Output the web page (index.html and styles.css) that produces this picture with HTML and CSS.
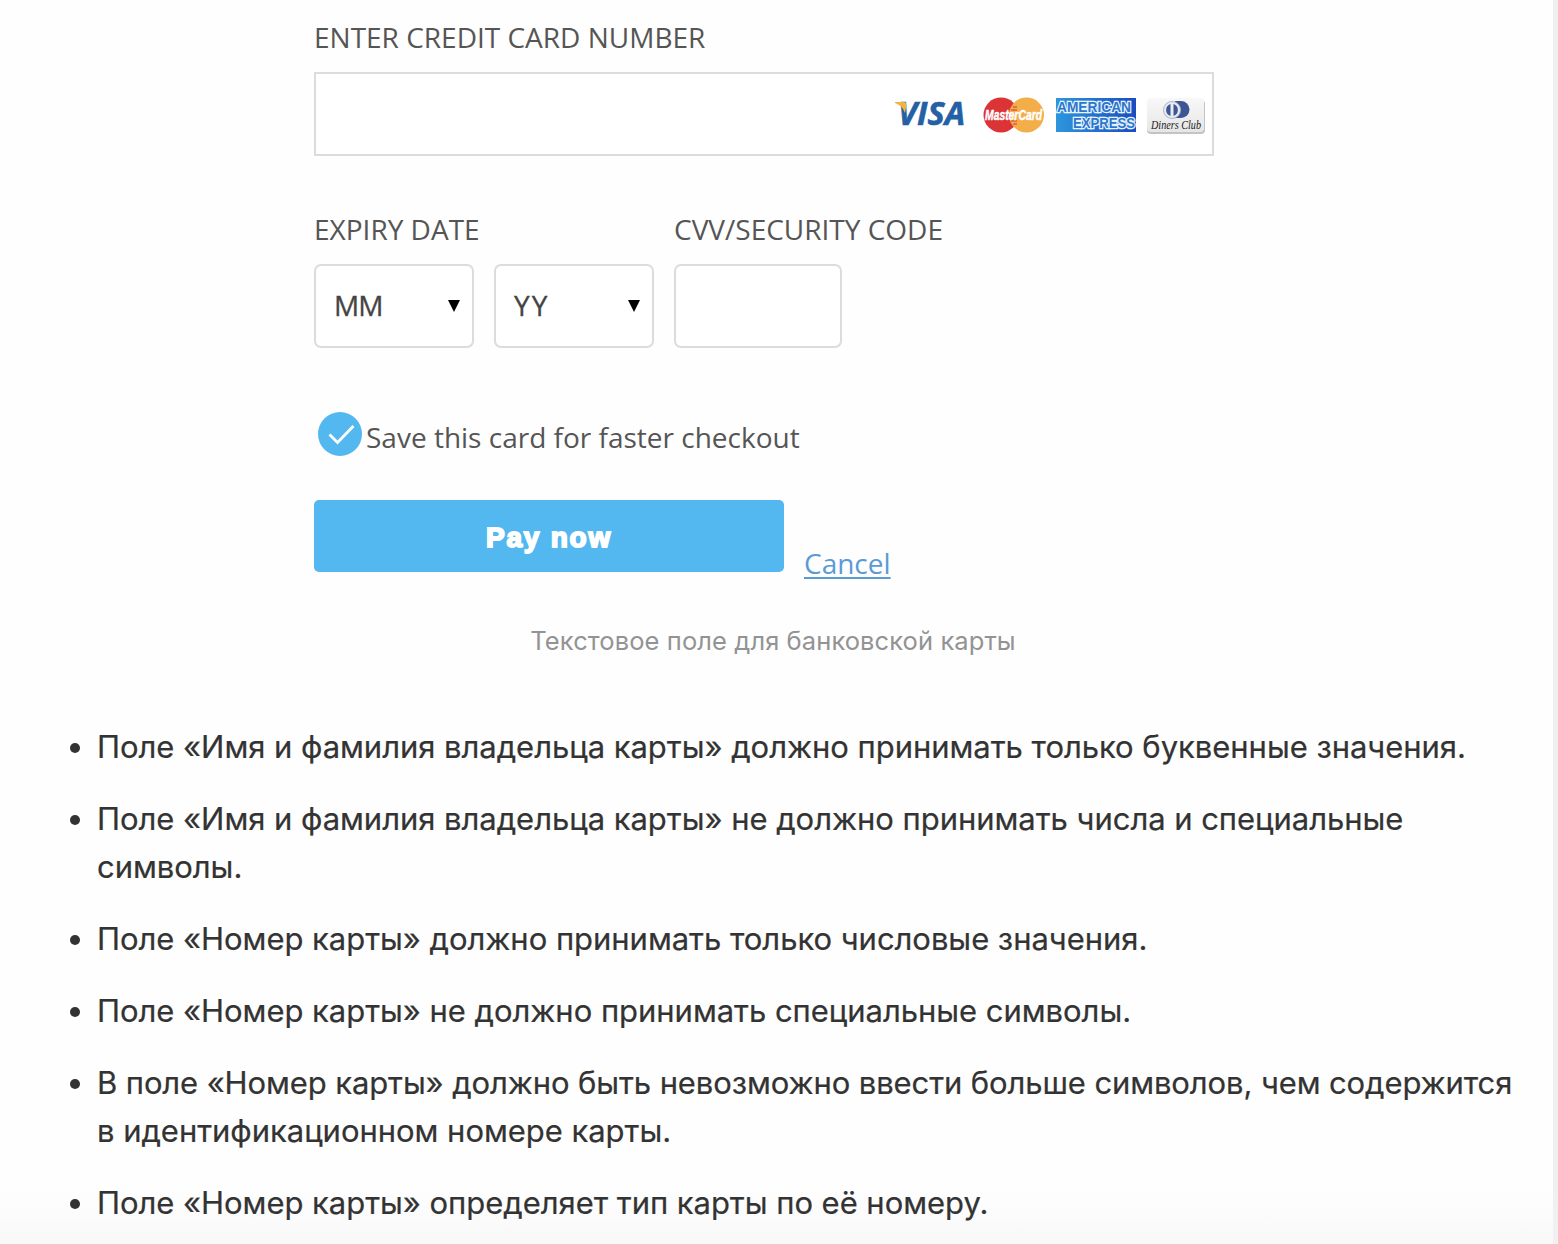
FILE: index.html
```html
<!DOCTYPE html>
<html lang="ru">
<head>
  <meta charset="UTF-8" />
  <meta name="viewport" content="width=device-width, initial-scale=1.0" />
  <title>Текстовое поле для банковской карты</title>
  <link rel="stylesheet" href="styles.css">
</head>
<body>
  <main class="article">
    <figure class="figure">
      <form class="card-form">
        <div class="label">ENTER CREDIT CARD NUMBER</div>
        <div class="box box-number">
          <svg class="brands" width="312" height="40" viewBox="0 0 312 40">
            <defs>
              <linearGradient id="amex" x1="0" y1="0" x2="1" y2="0">
                <stop offset="0" stop-color="#2d96dc" />
                <stop offset="1" stop-color="#1a4cc0" />
              </linearGradient>
              <linearGradient id="diners" x1="0" y1="0" x2="0" y2="1">
                <stop offset="0" stop-color="#f8f8f8" />
                <stop offset="1" stop-color="#e6e6e6" />
              </linearGradient>
            </defs>
            <!-- Visa -->
            <text class="visa" x="4" y="31" textLength="67" lengthAdjust="spacingAndGlyphs">VISA</text>
            <path d="M1 8h9q2 0 2.500 3l-1.500 8Q8 11 1 9z" fill="#f2b43a" />
            <!-- MasterCard -->
            <circle cx="107" cy="21" r="17.500" fill="#db3336" />
            <circle cx="132.500" cy="21" r="17.500" fill="#f3ae49" />
            <path d="M119 13h4M117 16h6M117 27h6M119 30h4" stroke="#db3336" stroke-width="1.200" />
            <text class="master" x="91" y="26" textLength="57" lengthAdjust="spacingAndGlyphs">MasterCard</text>
            <!-- American Express -->
            <rect x="162" y="4" width="80" height="34" fill="url(#amex)" />
            <text class="amex" x="163" y="18" textLength="74" lengthAdjust="spacingAndGlyphs">AMERICAN</text>
            <text class="amex" x="179" y="34" textLength="62" lengthAdjust="spacingAndGlyphs">EXPRESS</text>
            <!-- Diners Club -->
            <rect x="253" y="6" width="58" height="34" rx="4" fill="#c4c4c4" />
            <rect x="253" y="4" width="57" height="34" rx="4" fill="url(#diners)" />
            <path d="M281 7h6a8.500 8.500 0 0 1 0 17h-6z" fill="#3d5794" />
            <circle cx="278" cy="16" r="8.500" fill="#e8ebf2" stroke="#a9b4cd" stroke-width="1" />
            <path d="M276.500 10v12a6.300 6.300 0 0 1 0-12zM279.500 10v12a6.300 6.300 0 0 0 0-12z" fill="#3d5794" />
            <text class="diners" x="257" y="35" textLength="50" lengthAdjust="spacingAndGlyphs">Diners Club</text>
          </svg>
        </div>

        <div class="row">
          <div class="expiry">
            <div class="label">EXPIRY DATE</div>
            <div class="selects">
              <div class="box box-select"><span class="mm">MM</span><i class="arrow"></i></div>
              <div class="box box-select"><span class="yy">YY</span><i class="arrow"></i></div>
            </div>
          </div>
          <div class="cvv">
            <div class="label">CVV/SECURITY CODE</div>
            <div class="box box-cvv"></div>
          </div>
        </div>

        <div class="save">
          <svg width="44" height="44" viewBox="0 0 44 44">
            <circle cx="22" cy="22" r="22" fill="#53b7f0" />
            <path d="M11.500 22.500l8 8L35.500 14" fill="none" stroke="#fff" stroke-width="2.800" />
          </svg>
          <span class="save-text">Save this card for faster checkout</span>
        </div>

        <div class="actions">
          <div class="pay">Pay now</div>
          <a class="cancel">Cancel</a>
        </div>
      </form>
      <figcaption>Текстовое поле для банковской карты</figcaption>
    </figure>

    <ul class="checks">
      <li>Поле «Имя и фамилия владельца карты» должно принимать только буквенные значения.</li>
      <li>Поле «Имя и фамилия владельца карты» не должно принимать числа и специальные<br>символы.</li>
      <li>Поле «Номер карты» должно принимать только числовые значения.</li>
      <li>Поле «Номер карты» не должно принимать специальные символы.</li>
      <li><span class="tight">В поле «Номер карты» должно быть невозможно ввести больше символов, чем содержится</span><br>в идентификационном номере карты.</li>
      <li>Поле «Номер карты» определяет тип карты по её номеру.</li>
    </ul>
  </main>
</body>
</html>
```

FILE: styles.css
```css
*,*::before,*::after{box-sizing:border-box;margin:0;padding:0}
html,body{width:100%;height:100%;overflow:hidden}
body{
  background:#f0f0f0;
  color:#333;
  font-family:Inter,"Noto Sans",sans-serif;
}

.article{
  width:1553px;height:1244px;overflow:hidden;
  background:linear-gradient(#fefefe 0,#fefefe 1190px,#f8f8f8 1244px);
}

/* payment form */
.card-form{
  width:900px;margin-left:314px;padding-top:20px;
  font-family:"Open Sans",sans-serif;font-size:28px;color:#555;
}
.label{height:36px;line-height:34px;white-space:nowrap}
.box{
  height:84px;border:2px solid #dcdcdc;background:#fff;
  display:flex;align-items:center;
}
.box-number{margin-top:16px;justify-content:flex-end;padding-right:6px}
.row{display:flex;gap:20px;margin-top:56px}
.row .box{margin-top:16px;border-radius:7px}
.selects{display:flex;gap:20px}
.box-select{
  width:160px;justify-content:space-between;padding:0 12px 0 18px;
  color:#444;
}
.box-select span{padding-bottom:2px;-webkit-text-stroke:.3px #444}
.mm{letter-spacing:-1px}
.yy{letter-spacing:2px}
.box-cvv{width:168px}
.arrow{
  width:12px;height:12px;background:#000;
  clip-path:polygon(0 0,100% 0,50% 100%);
}

.save{display:flex;margin-top:64px;padding-left:4px;gap:4px}
.save-text{line-height:50px;height:44px;white-space:nowrap}

.actions{display:flex;margin-top:44px;gap:20px}
.pay{
  width:470px;height:72px;line-height:76px;border-radius:5px;
  background:#53b7f0;color:#fff;text-align:center;
  font-family:"Liberation Sans",Arial,sans-serif;font-weight:bold;
  -webkit-text-stroke:1.800px #fff;letter-spacing:1.800px;
}
.cancel{
  color:#5b9bd5;line-height:36px;margin-top:45px;height:37px;
  text-decoration:underline;text-decoration-thickness:2px;text-underline-offset:3px;
}

figcaption{
  margin-top:41px;padding-right:7px;text-align:center;
  font-size:25.5px;line-height:36px;letter-spacing:.090px;color:#939393;
}

/* card logos */
.brands{overflow:visible}
.visa{font:italic 700 32px "Open Sans",sans-serif;fill:#2460a4;stroke:#2460a4;stroke-width:.6px}
.master{font:italic bold 14px "Liberation Sans",sans-serif;fill:#fff;stroke:#fff;stroke-width:.5px}
.amex{
  font:bold 14px "Liberation Sans",sans-serif;fill:#2b77cd;
  stroke:#e6f2fc;stroke-width:2.500px;paint-order:stroke;
}
.diners{font:italic 12px "Liberation Serif",serif;fill:#222}

/* requirements list */
.checks{list-style:none;margin-top:64px;padding-left:97px}
.checks li{
  position:relative;margin-bottom:24px;
  font-size:31px;line-height:48px;letter-spacing:-.040px;white-space:nowrap;
  -webkit-text-stroke:.2px #333;
}
.checks .tight{letter-spacing:-.110px}
.checks li::before{
  content:"";position:absolute;left:-27px;top:20px;
  width:10px;height:10px;border-radius:50%;background:#333;
}
```
